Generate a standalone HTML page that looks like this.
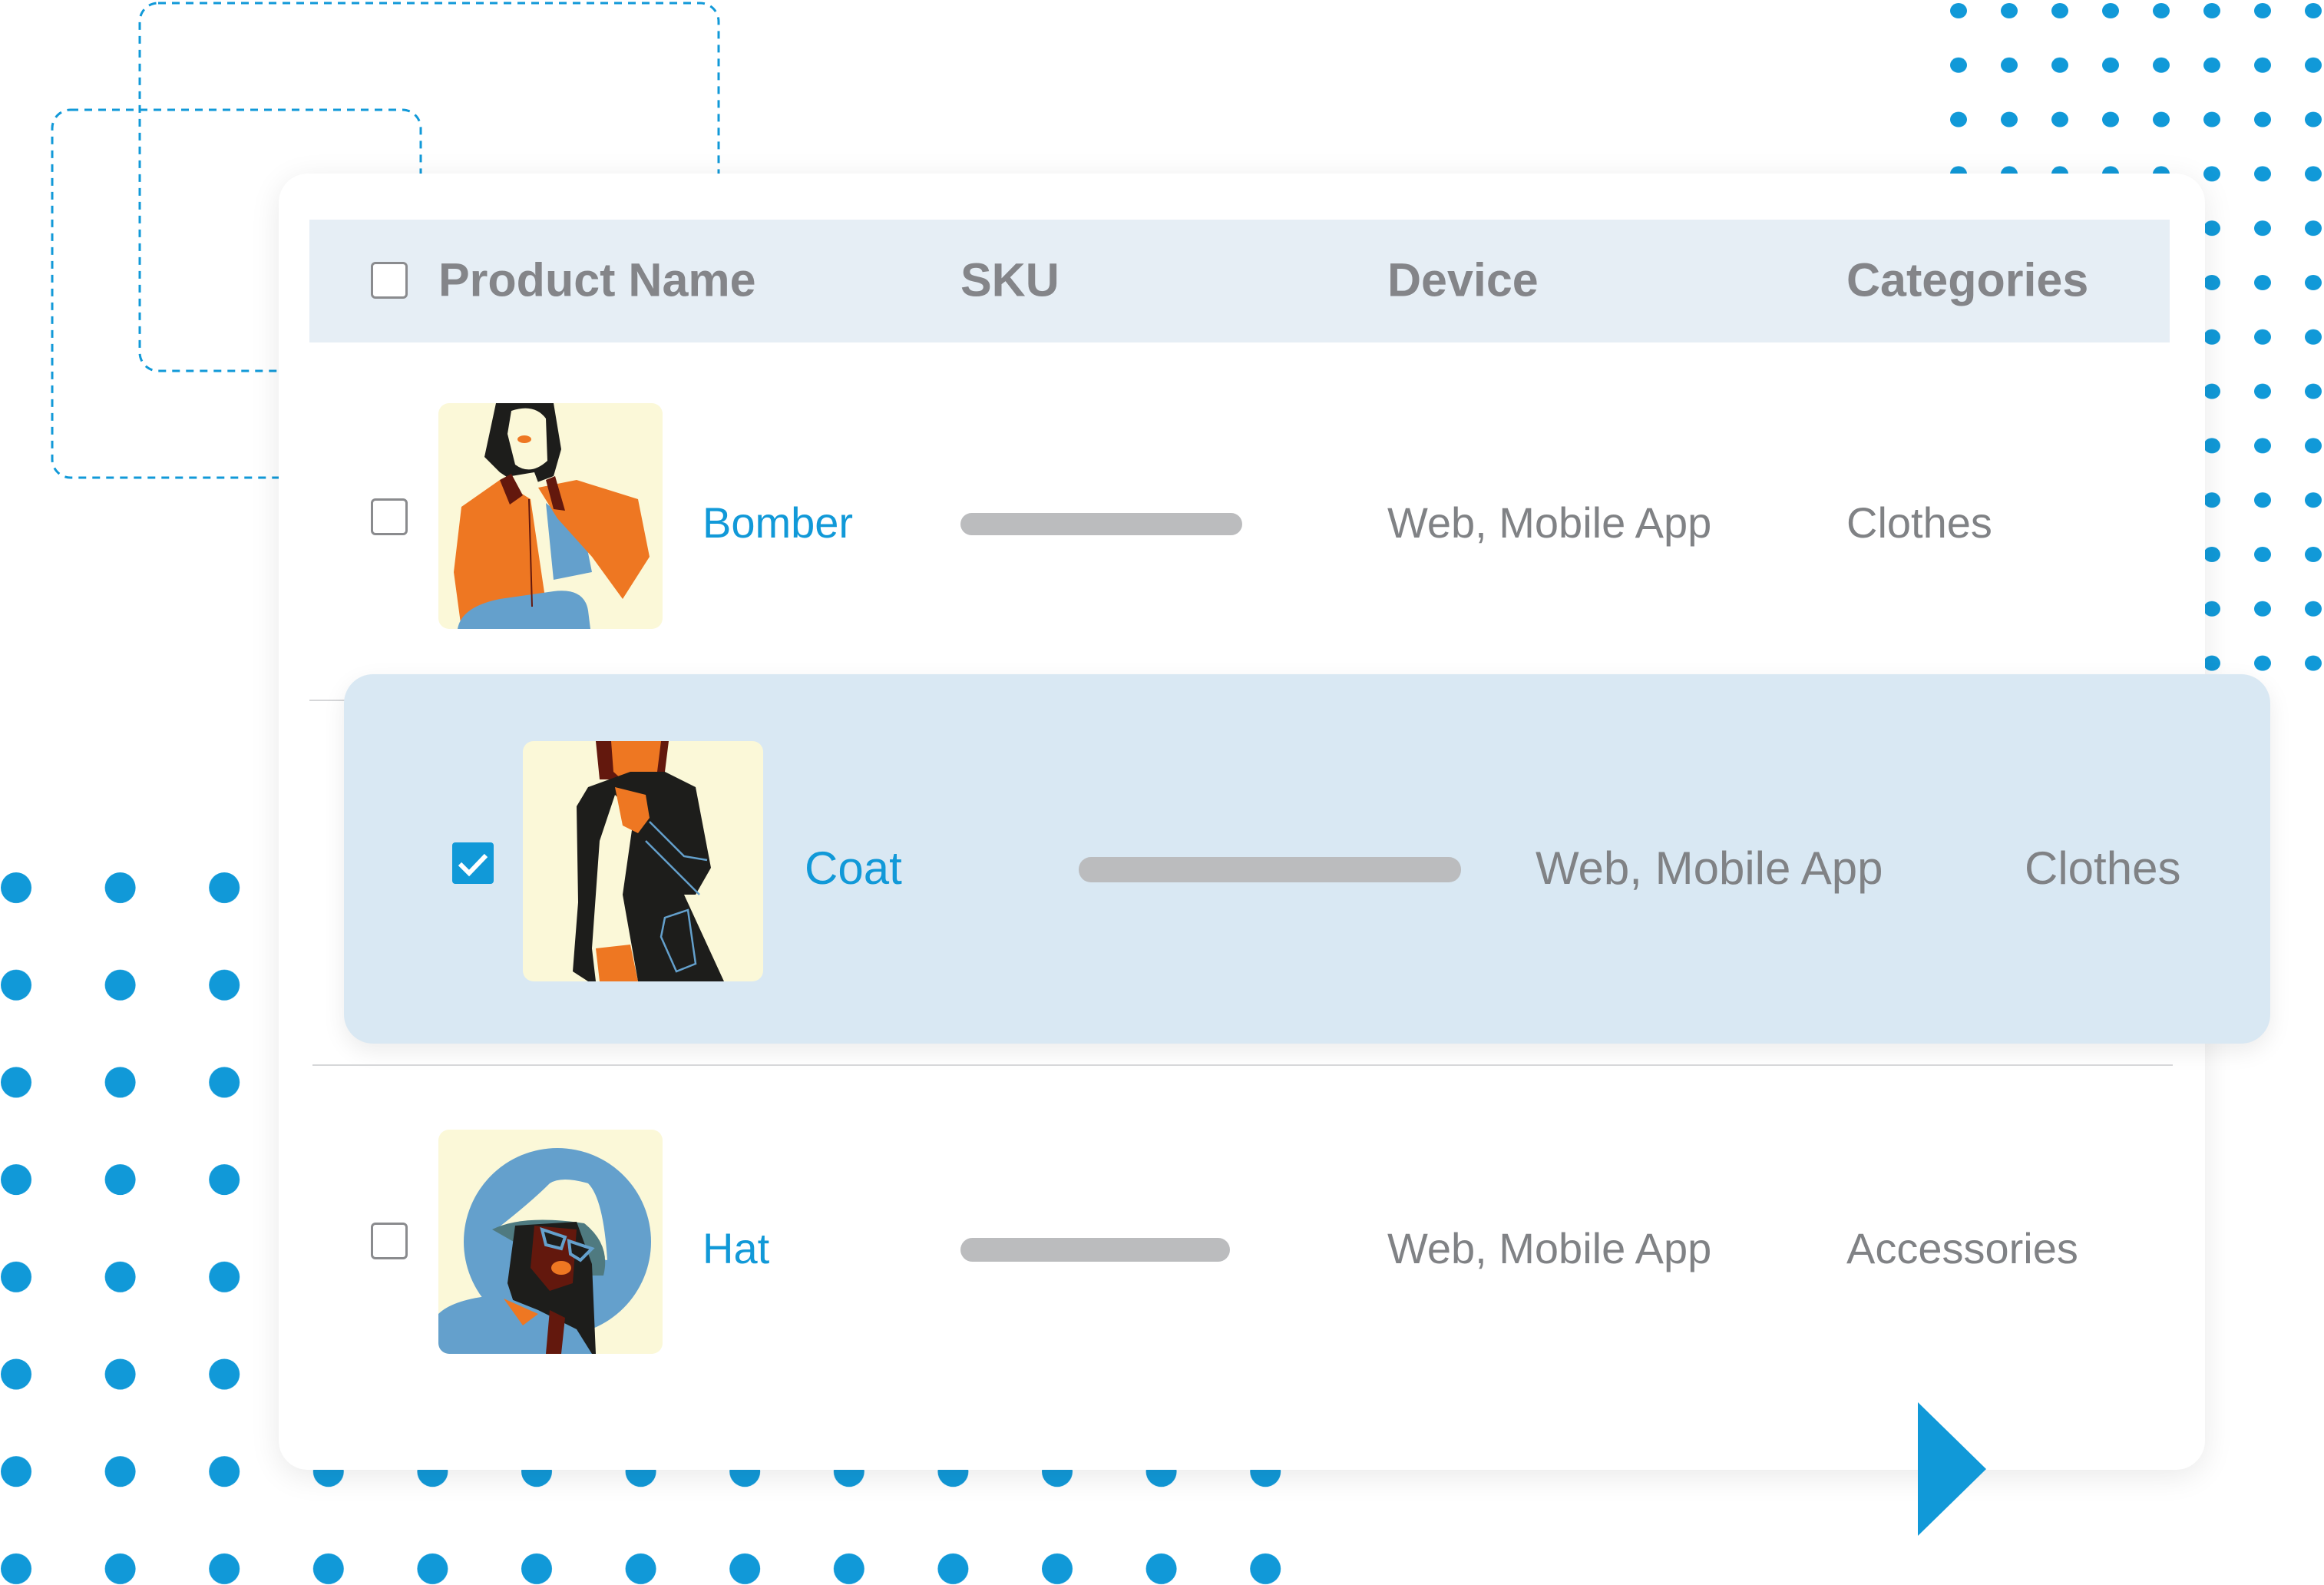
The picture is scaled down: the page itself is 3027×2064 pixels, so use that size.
<!DOCTYPE html>
<html><head><meta charset="utf-8"><style>
html,body{margin:0;padding:0;background:#fff;}
body{width:3027px;height:2064px;position:relative;overflow:hidden;font-family:"Liberation Sans",sans-serif;}
.abs{position:absolute;}
.card{position:absolute;left:363px;top:226px;width:2509px;height:1688px;background:#fff;border-radius:38px;box-shadow:0 8px 40px rgba(0,0,0,0.09);}
.hdr{position:absolute;left:403px;top:286px;width:2423px;height:160px;background:#e6eef5;}
.ht{position:absolute;top:365px;transform:translateY(-50%);font-size:61px;font-weight:bold;color:#848589;line-height:1;white-space:nowrap;}
.cb{position:absolute;width:48px;height:48px;border:3px solid #8a8b8e;border-radius:6px;background:#fff;box-sizing:border-box;}
.t{position:absolute;transform:translateY(-50%);font-size:56px;color:#808285;line-height:1;white-space:nowrap;}
.b{color:#1199d8;}
.bar{position:absolute;background:#bbbcbe;border-radius:16px;}
.img{position:absolute;border-radius:14px;overflow:hidden;background:#fbf8d8;}
.line{position:absolute;height:2px;background:#d6d7d9;}
</style></head><body>

<svg class="abs" style="left:0;top:0" width="3027" height="2064">
  <rect x="182" y="4" width="754" height="479" rx="24" fill="none" stroke="#1199d8" stroke-width="3" stroke-dasharray="10 8"/>
  <rect x="68" y="143" width="480" height="479" rx="24" fill="none" stroke="#1199d8" stroke-width="3" stroke-dasharray="10 8"/>
  <g fill="#1199d8">
  <!-- top right dots -->
  <g id="tr">
  </g>
  </g>
</svg>

<svg class="abs" style="left:0;top:0" width="3027" height="2064" id="dots">
<defs>
<pattern id="p1" x="2540" y="3" width="66" height="70.8" patternUnits="userSpaceOnUse"><ellipse cx="11" cy="11" rx="11" ry="10" fill="#1199d8"/></pattern>
<pattern id="p2" x="1" y="1136" width="135.6" height="126.7" patternUnits="userSpaceOnUse"><circle cx="20" cy="20" r="20" fill="#1199d8"/></pattern>
</defs>
<rect x="2540" y="3" width="487" height="880" fill="url(#p1)"/>
<rect x="1" y="1136" width="1680" height="928" fill="url(#p2)"/>
</svg>

<div class="card"></div>
<div class="hdr"></div>
<div class="cb" style="left:483px;top:341px;"></div>
<div class="ht" style="left:571px;">Product Name</div>
<div class="ht" style="left:1251px;">SKU</div>
<div class="ht" style="left:1807px;">Device</div>
<div class="ht" style="left:2405px;">Categories</div>

<!-- Row 1 -->
<div class="cb" style="left:483px;top:649px;"></div>
<div class="img" style="left:571px;top:525px;width:292px;height:294px;">
<svg width="292" height="294" viewBox="0 0 292 294">
  <path d="M75 0 H150 L160 60 L150 95 L110 110 L80 90 L60 70 Z" fill="#1d1d1b"/>
  <path d="M95 10 Q125 0 140 20 L142 75 Q120 95 100 80 L90 40 Z" fill="#fbf8d8"/>
  <ellipse cx="112" cy="47" rx="9" ry="5" fill="#ee7722"/>
  <path d="M95 95 L125 90 L140 130 L130 170 L100 140 Z" fill="#fbf8d8"/>
  <path d="M140 130 L190 170 L200 220 L150 230 Z" fill="#64a0cc"/>
  <path d="M30 294 L20 220 L30 135 L80 100 L120 125 L140 260 L120 294 Z" fill="#ee7722"/>
  <path d="M130 110 L180 100 L260 125 L275 200 L240 255 L200 200 L155 150 Z" fill="#ee7722"/>
  <path d="M80 100 L95 92 L110 120 L93 132 Z" fill="#63180d"/>
  <path d="M140 100 L152 95 L165 140 L150 138 Z" fill="#63180d"/>
  <path d="M25 294 Q30 265 80 255 L150 245 Q190 240 195 270 L198 294 Z" fill="#64a0cc"/>
  <line x1="118" y1="125" x2="122" y2="265" stroke="#63180d" stroke-width="2"/>
</svg></div>
<div class="b t" style="left:915px;top:681px;">Bomber</div>
<div class="bar" style="left:1251px;top:668px;width:367px;height:29px;"></div>
<div class="t" style="left:1807px;top:681px;">Web, Mobile App</div>
<div class="t" style="left:2405px;top:681px;">Clothes</div>

<div class="line" style="left:403px;top:911px;width:80px;"></div>

<!-- Row 2 highlighted -->
<div class="abs" style="left:448px;top:878px;width:2509px;height:481px;background:#d9e8f3;border-radius:38px;box-shadow:0 10px 30px rgba(0,0,0,0.08);"></div>
<div class="abs" style="left:589px;top:1097px;width:54px;height:54px;background:#1199d8;border-radius:4px;">
<svg width="54" height="54"><path d="M10 28 L22 40 L44 17" stroke="#fff" stroke-width="6" fill="none"/></svg></div>
<div class="img" style="left:681px;top:965px;width:313px;height:313px;">
<svg width="313" height="313" viewBox="0 0 313 313">
  <path d="M95 0 H190 L185 40 L150 50 L100 50 Z" fill="#63180d"/>
  <path d="M115 0 H180 L175 40 L140 60 L118 40 Z" fill="#ee7722"/>
  <path d="M85 60 L140 40 L185 40 L225 60 L245 165 L225 200 L210 200 L262 313 H85 L65 300 L72 210 L70 85 Z" fill="#1d1d1b"/>
  <path d="M120 70 L145 95 L130 200 L150 313 H95 L90 270 L100 130 Z" fill="#fbf8d8"/>
  <path d="M95 270 L140 265 L150 313 H100 Z" fill="#ee7722"/>
  <path d="M120 60 L160 70 L165 100 L150 120 L130 110 Z" fill="#ee7722"/>
  <path d="M185 230 L215 220 L225 290 L200 300 L180 255 Z" fill="none" stroke="#64a0cc" stroke-width="2.5"/>
  <path d="M165 105 L210 150 L240 155 M160 130 L230 200" fill="none" stroke="#64a0cc" stroke-width="2.5"/>
</svg></div>
<div class="b t" style="left:1048px;top:1131px;font-size:60px;">Coat</div>
<div class="bar" style="left:1405px;top:1116px;width:498px;height:33px;"></div>
<div class="t" style="left:2000px;top:1131px;font-size:60px;">Web, Mobile App</div>
<div class="t" style="left:2637px;top:1131px;font-size:60px;">Clothes</div>

<div class="line" style="left:407px;top:1386px;width:2423px;"></div>

<!-- Row 3 -->
<div class="cb" style="left:483px;top:1592px;"></div>
<div class="img" style="left:571px;top:1471px;width:292px;height:292px;">
<svg width="292" height="292" viewBox="0 0 292 292">
  <circle cx="155" cy="146" r="122" fill="#64a0cc"/>
  <path d="M75 130 Q120 95 145 70 Q160 60 195 70 Q215 90 220 170 Q150 160 75 130 Z" fill="#fbf8d8"/>
  <path d="M70 130 Q110 110 190 122 Q225 150 215 190 L175 190 Z" fill="#4f7a80"/>
  <path d="M100 125 L180 120 L200 175 L205 292 H120 L90 200 Z" fill="#1d1d1b"/>
  <path d="M125 125 L180 130 L175 200 L145 210 L120 180 Z" fill="#63180d"/>
  <ellipse cx="160" cy="180" rx="13" ry="9" fill="#ee7722"/>
  <path d="M135 130 L165 140 L160 155 L140 150 Z M170 145 L200 155 L185 170 L172 162 Z" fill="#1d1d1b" stroke="#64a0cc" stroke-width="4"/>
  <path d="M0 292 V240 Q20 220 80 215 L130 235 L180 260 L200 292 Z" fill="#64a0cc"/>
  <path d="M85 220 L130 240 L110 255 Z" fill="#ee7722"/>
  <path d="M145 235 L165 245 L160 292 H140 Z" fill="#63180d"/>
</svg></div>
<div class="b t" style="left:915px;top:1626px;">Hat</div>
<div class="bar" style="left:1251px;top:1612px;width:351px;height:31px;"></div>
<div class="t" style="left:1807px;top:1626px;">Web, Mobile App</div>
<div class="t" style="left:2405px;top:1626px;">Accessories</div>

<svg class="abs" style="left:2498px;top:1826px" width="90" height="175"><path d="M0 0 L89 87 L0 174 Z" fill="#1199d8"/></svg>

</body></html>
